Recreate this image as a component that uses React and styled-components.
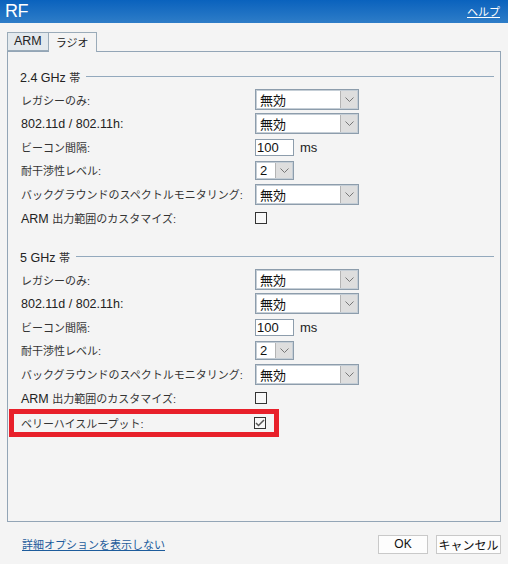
import React from 'react';
import styled, { createGlobalStyle } from 'styled-components';

const GlobalStyle = createGlobalStyle`
    body {
        margin: 0;
        background: #f4f4f4;
        font-family: "Liberation Sans", "Noto Sans CJK JP", sans-serif;
        color: #222;
    }
`;

const Frame = styled.div`
    width: 508px;
    height: 564px;
    display: flex;
    flex-direction: column;
    background: #f4f4f4;
`;

const TitleBar = styled.div`
    height: 24px;
    display: flex;
    align-items: center;
    justify-content: space-between;
    padding: 0 8px 0 5px;
    background: linear-gradient(#0a62bd, #2e7dc8);
`;

const Title = styled.div`
    color: #fff;
    font-size: 18px;
    letter-spacing: -0.5px;
`;

const HelpLink = styled.a`
    color: #fff;
    font-size: 11px;
    text-decoration: underline;
`;

const Body = styled.div`
    padding: 9px 7px 0 7px;
`;

const Tabs = styled.div`
    display: flex;
    height: 19px;
`;

const Tab = styled.div`
    position: relative;
    z-index: 1;
    height: ${ p => p.active ? '20px' : '19px' };
    box-sizing: border-box;
    padding: 0 ${ p => p.active ? '7px' : '6px' };
    display: flex;
    align-items: center;
    font-size: ${ p => p.jp ? '11px' : '12.5px' };
    border: 1px solid #9aabb9;
    border-bottom: ${ p => p.active ? 'none' : '1px solid #9aabb9' };
    border-left: ${ p => p.active ? 'none' : '1px solid #9aabb9' };
    background: ${ p => p.active ? '#f4f4f4' : '#e3e9ed' };
`;

const Panel = styled.div`
    height: 471px;
    box-sizing: border-box;
    border: 1px solid #93a5b6;
    padding: 17px 6px 0 12px;
`;

const Section = styled.div`
    margin-top: ${ p => p.first ? '0' : '20px' };
`;

const Legend = styled.div`
    height: 16px;
    display: flex;
    align-items: center;
    gap: 6px;
    font-size: 12.5px;
    margin-bottom: 3px;

    &::after {
        content: '';
        flex: 1;
        height: 1px;
        background: #93a9bd;
    }
`;

const Row = styled.div`
    height: ${ p => p.h }px;
    display: flex;
    align-items: center;
`;

const Label = styled.div`
    width: ${ p => p.w || 234 }px;
    padding-left: 1px;
    font-size: 12.5px;
    white-space: nowrap;
    color: #222;
`;

const J = styled.span`
    font-size: 11px;
    color: #333;
`;

const Select = styled.div`
    width: ${ p => p.w }px;
    height: ${ p => p.h }px;
    box-sizing: border-box;
    border: 1px solid #8d9dac;
    box-shadow: inset 0 0 0 1px #c5ced6;
    background: #fff;
    display: flex;
    align-items: stretch;
`;

const SelectValue = styled.div`
    flex: 1;
    display: flex;
    align-items: center;
    padding-left: 4px;
    font-size: 13px;
    color: #111;
`;

const Arrow = styled.div`
    width: 16px;
    margin: 1px;
    background: #dedede;
    border-left: 1px solid #b4b4b4;
    display: flex;
    align-items: center;
    justify-content: center;
`;

const TextInput = styled.div`
    width: 39px;
    height: 17px;
    box-sizing: border-box;
    border: 1px solid #8d9dac;
    background: #fff;
    font-size: 13px;
    padding-left: 1px;
    display: flex;
    align-items: center;
    color: #111;
`;

const Unit = styled.span`
    margin-left: 6px;
    font-size: 13px;
`;

const Check = styled.div`
    width: 12px;
    height: 12px;
    box-sizing: border-box;
    border: 1px solid #333;
    background: #f8f8f8;
    display: flex;
    align-items: center;
    justify-content: center;
`;

const Highlight = styled.div`
    width: 270px;
    height: 28px;
    box-sizing: border-box;
    margin-left: -11px;
    border: 5px solid #e8202a;
    padding-left: 6px;
    display: flex;
    align-items: center;
`;

const Footer = styled.div`
    height: 42px;
    display: flex;
    align-items: center;
    justify-content: space-between;
    padding: 3px 7px 0 22px;
`;

const DetailLink = styled.a`
    font-size: 11px;
    color: #1d5c9c;
    text-decoration: underline;
`;

const Buttons = styled.div`
    display: flex;
    gap: 8px;
`;

const Button = styled.div`
    width: ${ p => p.w }px;
    height: 19px;
    box-sizing: border-box;
    border: 1px solid #c9c9c9;
    background: #fdfdfd;
    display: flex;
    align-items: center;
    justify-content: center;
    font-size: 12px;
    color: #111;
`;

const Chevron = () => (
    <svg width="9" height="5" viewBox="0 0 9 5">
        <polyline points="0.5,0.5 4.5,4.5 8.5,0.5" fill="none" stroke="#777" strokeWidth="1" />
    </svg>
);

const Dropdown = ({ value, w = 104, h = 21 }) => (
    <Select w={ w } h={ h }>
        <SelectValue>{ value }</SelectValue>
        <Arrow><Chevron /></Arrow>
    </Select>
);

const CheckBox = ({ checked }) => (
    <Check>
        { checked &&
            <svg width="10" height="8" viewBox="0 0 10 8">
                <polyline points="1,4 3.5,6.5 9,1" fill="none" stroke="#555" strokeWidth="1.5" />
            </svg>
        }
    </Check>
);

const BandSection = ({ title, first, children }) => (
    <Section first={ first }>
        <Legend>{ title }</Legend>
        <Row h={ 24 }>
            <Label><J>レガシーのみ:</J></Label>
            <Dropdown value="無効" />
        </Row>
        <Row h={ 24 }>
            <Label>802.11d / 802.11h:</Label>
            <Dropdown value="無効" />
        </Row>
        <Row h={ 23 }>
            <Label><J>ビーコン間隔:</J></Label>
            <TextInput>100</TextInput>
            <Unit>ms</Unit>
        </Row>
        <Row h={ 23 }>
            <Label><J>耐干渉性レベル:</J></Label>
            <Dropdown value="2" w={ 39 } h={ 19 } />
        </Row>
        <Row h={ 25 }>
            <Label><J>バックグラウンドのスペクトルモニタリング:</J></Label>
            <Dropdown value="無効" />
        </Row>
        <Row h={ 22 }>
            <Label>ARM <J>出力範囲のカスタマイズ:</J></Label>
            <CheckBox />
        </Row>
        { children }
    </Section>
);

const App = () => {
    return (
        <Frame>
            <GlobalStyle />
            <TitleBar>
                <Title>RF</Title>
                <HelpLink>ヘルプ</HelpLink>
            </TitleBar>
            <Body>
                <Tabs>
                    <Tab>ARM</Tab>
                    <Tab active jp>ラジオ</Tab>
                </Tabs>
                <Panel>
                    <BandSection first title={ <span>2.4 GHz <J>帯</J></span> } />
                    <BandSection title={ <span>5 GHz <J>帯</J></span> }>
                        <Row h={ 29 }>
                            <Highlight>
                                <Label w={ 233 }><J>ベリーハイスループット:</J></Label>
                                <CheckBox checked />
                            </Highlight>
                        </Row>
                    </BandSection>
                </Panel>
            </Body>
            <Footer>
                <DetailLink>詳細オプションを表示しない</DetailLink>
                <Buttons>
                    <Button w={ 50 }>OK</Button>
                    <Button w={ 65 }>キャンセル</Button>
                </Buttons>
            </Footer>
        </Frame>
    );
};

export default App;
